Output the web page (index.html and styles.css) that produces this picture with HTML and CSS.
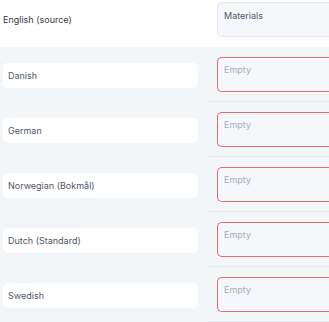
FILE: index.html
```html
<!DOCTYPE html>
<html lang="en">
  <head>
    <meta charset="UTF-8" />
    <meta name="viewport" content="width=device-width, initial-scale=1.0" />
    <title>Translations</title>
    <link rel="stylesheet" href="styles.css">
  </head>
  <body>
    <div class="source-row">
      <div class="source-label">English (source)</div>
      <div class="value-cell">
        <div class="source-text">Materials</div>
      </div>
    </div>

    <div class="rows">
      <div class="row">
        <div class="label-cell"><div class="lang">Danish</div></div>
        <div class="value-cell"><div class="field">Empty</div></div>
      </div>
      <div class="row">
        <div class="label-cell"><div class="lang">German</div></div>
        <div class="value-cell"><div class="field">Empty</div></div>
      </div>
      <div class="row">
        <div class="label-cell"><div class="lang">Norwegian (Bokmål)</div></div>
        <div class="value-cell"><div class="field">Empty</div></div>
      </div>
      <div class="row">
        <div class="label-cell"><div class="lang">Dutch (Standard)</div></div>
        <div class="value-cell"><div class="field">Empty</div></div>
      </div>
      <div class="row">
        <div class="label-cell"><div class="lang">Swedish</div></div>
        <div class="value-cell"><div class="field">Empty</div></div>
      </div>
    </div>
  </body>
</html>
```

FILE: styles.css
```css
* {
  margin: 0;
  padding: 0;
  box-sizing: border-box;
}
html,
body {
  width: 100%;
  height: 100%;
  font-family: "Inter", "Noto Sans", sans-serif;
  font-size: 9px;
  background: #f2f6f9;
  overflow: hidden;
}
.source-row {
  display: grid;
  grid-template-columns: 208px 1fr;
  background: #fff;
  padding: 2px 0 10px 0;
  height: 47px;
}
.source-label {
  display: flex;
  align-items: center;
  padding-left: 3px;
  color: #343a48;
  height: 35px;
}
.value-cell {
  padding-left: 9px;
}
.source-text {
  height: 35px;
  padding: 7px 6px;
  background: #f5f7fa;
  border: 1px solid #e4e8ee;
  border-right: none;
  border-radius: 5px 0 0 5px;
  color: #4f5668;
}
.row {
  display: grid;
  grid-template-columns: 208px 1fr;
}
.label-cell {
  display: flex;
  align-items: center;
  padding: 10px 0 9px 3px;
}
.lang {
  width: 195px;
  height: 25px;
  display: flex;
  align-items: center;
  padding-left: 5px;
  background: #fff;
  border-radius: 5px;
  color: #4f5668;
}
.row .value-cell {
  padding-top: 10px;
  padding-bottom: 9px;
  border-bottom: 1px solid #e3e8ed;
}
.field {
  height: 35px;
  padding: 6px 6px;
  background: #f5f7fa;
  border: 1.5px solid #e36d6d;
  border-right: none;
  border-radius: 5px 0 0 5px;
  color: #a6aebc;
}
```
